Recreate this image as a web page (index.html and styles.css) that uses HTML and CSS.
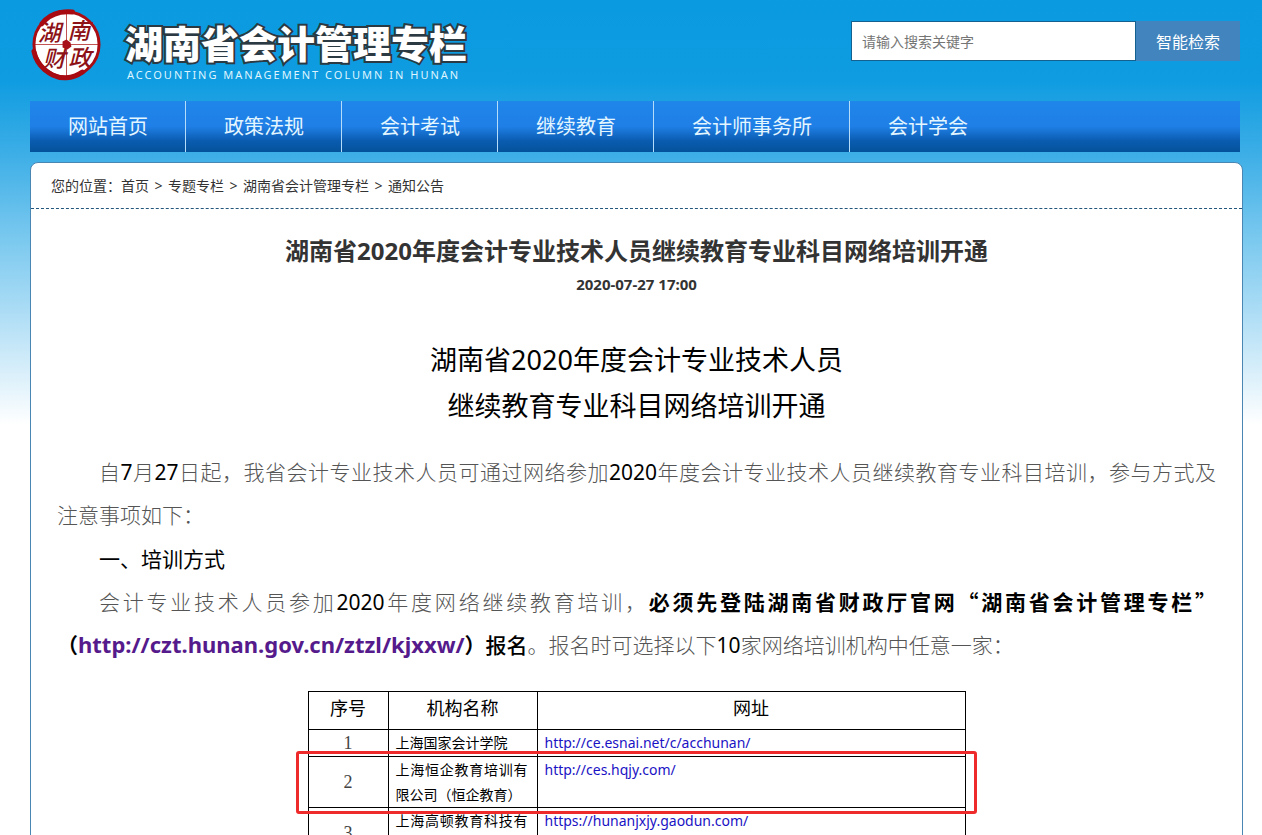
FILE: index.html
```html
<!DOCTYPE html>
<html lang="zh-CN">
<head>
<meta charset="utf-8">
<meta name="viewport" content="width=device-width, initial-scale=1">
<title>湖南省会计管理专栏</title>
<link rel="stylesheet" href="styles.css">
</head>
<body>
<div class="page">
  <header class="header">
    <div class="brand">
      <svg class="seal" viewBox="0 0 74 74" aria-hidden="true">
        <circle cx="37" cy="37" r="33" fill="#fff"/>
        <path d="M37 4v66M4 37h66" stroke="#c05050" stroke-width="1"/>
        <g class="seal-text">
          <text x="8" y="33">湖</text><text x="38" y="31">南</text>
          <text x="13" y="60">财</text><text x="39" y="59">政</text>
        </g>
        <path d="M33 34l4-2 4 3 1 4-4 3-5-2z" fill="#a81018"/>
        <circle cx="37" cy="37" r="33" fill="none" stroke="#a80d14" stroke-width="3"/>
        <path d="M12 16C20 6 30 3 43 4M4 44c2 10 9 19 19 24s21 3 30-3" fill="none" stroke="#a80a12" stroke-width="5" stroke-linecap="round" stroke-dasharray="22 1"/>
      </svg>
      <div class="brand-text">
        <div class="brand-name">湖南省会计管理专栏</div>
        <div class="brand-sub">ACCOUNTING MANAGEMENT COLUMN IN HUNAN</div>
      </div>
    </div>
    <form class="search">
      <input class="search-input" type="text" placeholder="请输入搜索关键字" aria-label="请输入搜索关键字">
      <button class="search-button" type="button">智能检索</button>
    </form>
  </header>
  <nav class="nav">
    <a href="#">网站首页</a>
    <a href="#">政策法规</a>
    <a href="#">会计考试</a>
    <a href="#">继续教育</a>
    <a href="#">会计师事务所</a>
    <a href="#">会计学会</a>
  </nav>
  <main class="card">
    <div class="crumbs"><span>您的位置：</span><a href="#">首页</a><span class="sep">&gt;</span><a href="#">专题专栏</a><span class="sep">&gt;</span><a href="#">湖南省会计管理专栏</a><span class="sep">&gt;</span><a href="#">通知公告</a></div>
    <article class="article">
      <h1 class="title">湖南省2020年度会计专业技术人员继续教育专业科目网络培训开通</h1>
      <div class="date">2020-07-27 17:00</div>
      <h2 class="doc-title">湖南省2020年度会计专业技术人员<br>继续教育专业科目网络培训开通</h2>
      <p class="para">自<span class="num">7</span>月<span class="num">27</span>日起，我省会计专业技术人员可通过网络参加<span class="num">2020</span>年度会计专业技术人员继续教育专业科目培训，参与方式及<span class="keep">注意</span>事项如下：</p>
      <h3 class="section">一、培训方式</h3>
      <p class="para">会计专业技术人员参加<span class="num">2020</span>年度网络继续教育培训，<strong class="strong">必须先登陆湖南省财政厅官网“湖南省会计管理专栏”（<a class="site" href="#">http://czt.hunan.gov.cn/ztzl/kjxxw/</a>）</strong><span class="medium">报名</span>。报名时可选择以下<span class="num">10</span>家网络培训机构中任意一家：</p>
      <div class="table-wrap">
        <table class="orgs">
          <colgroup><col class="c-no"><col class="c-name"><col class="c-url"></colgroup>
          <thead><tr><th>序号</th><th>机构名称</th><th>网址</th></tr></thead>
          <tbody>
            <tr><td class="no">1</td><td class="name">上海国家会计学院</td><td><a href="#">http://ce.esnai.net/c/acchunan/</a></td></tr>
            <tr><td class="no">2</td><td class="name">上海恒企教育培训有限公司（恒企教育）</td><td><a href="#">http://ces.hqjy.com/</a></td></tr>
            <tr><td class="no">3</td><td class="name">上海高顿教育科技有限公司</td><td><a href="#">https://hunanjxjy.gaodun.com/</a></td></tr>
          </tbody>
        </table>
        <div class="highlight"></div>
      </div>
    </article>
  </main>
</div>
</body>
</html>
```
FILE: styles.css
```css
* { box-sizing: border-box; }
body {
  margin: 0;
  height: 100vh;
  overflow: hidden;
  font-family: "Noto Sans", "Noto Sans CJK SC", sans-serif;
  font-size: 14px;
  color: #333;
  background: #fff linear-gradient(#0a9ae0 0, #0f9ce1 80px, #3aade6 150px, #74c6ee 230px, #abdcf5 310px, #fff 425px) no-repeat;
}
a { color: inherit; text-decoration: none; }
.page { padding: 0 19px 0 30px; }

.header {
  display: flex;
  justify-content: space-between;
  align-items: flex-start;
  height: 101px;
  margin-right: 3px;
}
.brand { display: flex; gap: 22px; padding-top: 8px; }
.seal { width: 73px; height: 73px; }
.seal-text {
  font-family: "Noto Sans CJK SC", sans-serif;
  font-size: 23px;
  font-weight: 500;
  font-style: italic;
  fill: #8c1218;
}
.brand-text { padding-top: 8px; }
.brand-name {
  font-family: "Noto Sans CJK SC", sans-serif;
  font-size: 38px;
  font-weight: 900;
  line-height: 52px;
  color: #fff;
  -webkit-text-stroke: 4px #2b3a42;
  paint-order: stroke fill;
}
.brand-sub {
  padding-left: 2px;
  font-size: 11px;
  line-height: 14px;
  letter-spacing: 2px;
  color: #dff5ff;
}
.search { display: flex; margin-top: 21px; }
.search-input {
  width: 285px;
  height: 40px;
  padding: 0 10px;
  border: 1px solid #14608f;
  background: #fff;
  font: inherit;
  color: #333;
}
.search-input::placeholder { color: #757575; }
.search-button {
  width: 104px;
  height: 40px;
  padding: 0;
  border: 0;
  background: #4284be;
  color: #fff;
  font-family: inherit;
  font-size: 16px;
}

.nav {
  display: flex;
  height: 51px;
  margin-right: 3px;
  background: linear-gradient(#1f86ea 0, #1f7fe6 50%, #0a5cb0 78%, #03529b 100%);
}
.nav a {
  padding: 0 37px 0 38px;
  border-right: 1px solid #b5dcf8;
  font-size: 20px;
  line-height: 52px;
  color: #e4f6ff;
}
.nav a:last-child { border-right: 0; }

.card {
  margin-top: 10px;
  min-height: 100vh;
  border: 1px solid #4a86b4;
  border-radius: 8px;
  background: #fff;
}
.crumbs {
  padding-left: 20px;
  line-height: 45px;
  border-bottom: 1px dashed #23567c;
}
.sep { display: inline-block; width: 19px; text-align: center; }

.article { padding: 22px 26px 0; color: #000; }
.title {
  margin: 0;
  font-size: 24px;
  line-height: 40px;
  text-align: center;
  color: #333;
}
.date {
  font-size: 15px;
  font-weight: 700;
  line-height: 26px;
  text-align: center;
  color: #333;
}
.doc-title {
  margin: 40px 0 21px;
  font-size: 27px;
  font-weight: 400;
  line-height: 46px;
  text-align: center;
}
.para {
  margin: 0 0 1px;
  font-family: "Noto Sans CJK SC", sans-serif;
  font-size: 21px;
  font-weight: 300;
  line-height: 43px;
  text-align: justify;
  text-indent: 2em;
  color: #555;
}
.num, .site { font-family: "Noto Sans", sans-serif; line-height: 1; }
.num { font-weight: 400; color: #000; }
.keep { white-space: nowrap; }
.strong { font-weight: 700; color: #000; }
.medium { font-weight: 500; color: #000; }
.site { font-size: 22px; white-space: nowrap; color: #551a8b; }
.section {
  margin: 0;
  font-family: "Noto Sans CJK SC", sans-serif;
  font-size: 21px;
  font-weight: 400;
  line-height: 43px;
  text-indent: 2em;
}

.table-wrap { position: relative; width: 658px; margin: 25px auto 0; }
.orgs {
  width: 100%;
  border-collapse: collapse;
  table-layout: fixed;
  line-height: 25px;
}
.c-no { width: 80px; }
.c-name { width: 149px; }
.orgs th, .orgs td { border: 1px solid #000; padding: 0 7px; vertical-align: top; }
.orgs th { height: 38px; padding: 0; font-size: 18px; font-weight: 400; line-height: 33px; }
.orgs tbody tr { height: 27px; }
.orgs .name { padding-right: 9px; text-align: justify; }
.orgs .no {
  font-family: "Liberation Serif", serif;
  font-size: 18px;
  text-align: center;
  vertical-align: middle;
  color: #444;
}
.orgs a { color: #1a12c4; }
.highlight {
  position: absolute;
  top: 60px;
  left: -12px;
  right: -11px;
  height: 63px;
  border: 3px solid #ee2a2a;
  border-radius: 3px;
}
```
